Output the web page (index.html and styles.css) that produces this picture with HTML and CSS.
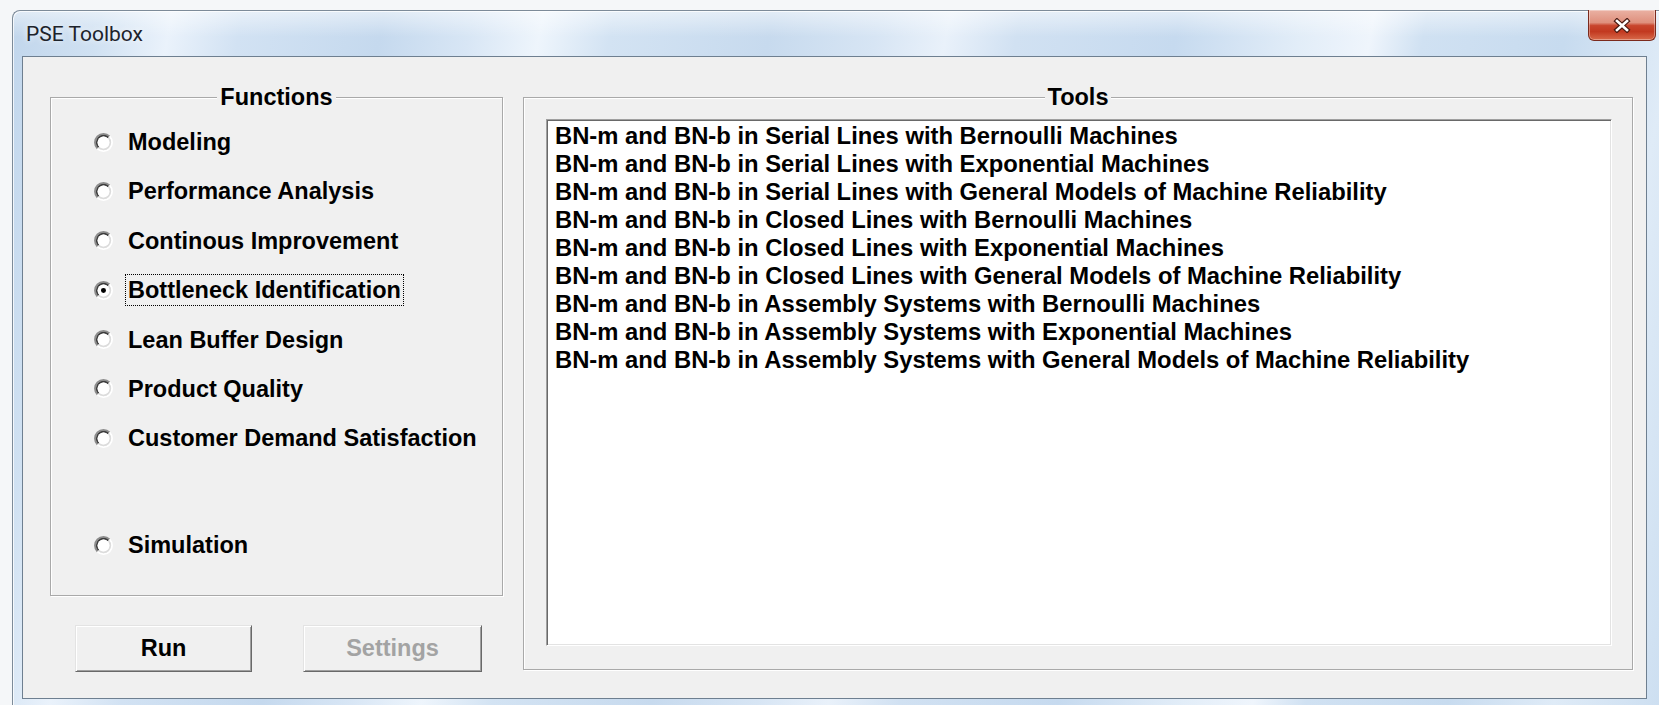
FILE: index.html
```html
<!DOCTYPE html>
<html lang="en">
<head>
<meta charset="utf-8">
<title>PSE Toolbox</title>
<link rel="stylesheet" href="styles.css">
</head>
<body>
<svg class="defs" width="0" height="0" aria-hidden="true">
  <symbol id="radio-ring" viewBox="0 0 16 16">
    <path d="M2.9 13.1 A7.2 7.2 0 0 1 13.1 2.9" fill="none" stroke="#8c8c8c" stroke-width="1.5"/>
    <path d="M13.1 2.9 A7.2 7.2 0 0 1 2.9 13.1" fill="none" stroke="#ffffff" stroke-width="1.5"/>
    <path d="M3.9 12.1 A5.8 5.8 0 0 1 12.1 3.9" fill="none" stroke="#3c3c3c" stroke-width="1.5"/>
    <path d="M12.1 3.9 A5.8 5.8 0 0 1 3.9 12.1" fill="none" stroke="#dcdcdc" stroke-width="1.5"/>
    <circle cx="8" cy="8" r="5" fill="#ffffff"/>
  </symbol>
</svg>

<div class="window">
  <div class="titlebar">
    <span class="title">PSE Toolbox</span>
    <button class="close" type="button" aria-label="Close">
      <svg width="18" height="15" viewBox="0 0 18 15">
        <path d="M4 3 L14 12 M14 3 L4 12" stroke="#4a1a12" stroke-width="5" stroke-linecap="square" fill="none"/>
        <path d="M4 3 L14 12 M14 3 L4 12" stroke="#ffffff" stroke-width="2.6" stroke-linecap="square" fill="none"/>
      </svg>
    </button>
  </div>

  <div class="client">
    <div class="left">
      <div class="group functions">
        <div class="group-title">Functions</div>
        <ul class="options">
          <li class="option"><svg class="radio" viewBox="0 0 16 16"><use href="#radio-ring" width="16" height="16"/></svg><span class="opt-label">Modeling</span></li>
          <li class="option"><svg class="radio" viewBox="0 0 16 16"><use href="#radio-ring" width="16" height="16"/></svg><span class="opt-label">Performance Analysis</span></li>
          <li class="option"><svg class="radio" viewBox="0 0 16 16"><use href="#radio-ring" width="16" height="16"/></svg><span class="opt-label">Continous Improvement</span></li>
          <li class="option is-checked"><svg class="radio" viewBox="0 0 16 16"><use href="#radio-ring" width="16" height="16"/><circle cx="8" cy="8" r="2.1" fill="#000"/></svg><span class="opt-label is-focused">Bottleneck Identification</span></li>
          <li class="option"><svg class="radio" viewBox="0 0 16 16"><use href="#radio-ring" width="16" height="16"/></svg><span class="opt-label">Lean Buffer Design</span></li>
          <li class="option"><svg class="radio" viewBox="0 0 16 16"><use href="#radio-ring" width="16" height="16"/></svg><span class="opt-label">Product Quality</span></li>
          <li class="option"><svg class="radio" viewBox="0 0 16 16"><use href="#radio-ring" width="16" height="16"/></svg><span class="opt-label">Customer Demand Satisfaction</span></li>
          <li class="option option-apart"><svg class="radio" viewBox="0 0 16 16"><use href="#radio-ring" width="16" height="16"/></svg><span class="opt-label">Simulation</span></li>
        </ul>
      </div>
      <div class="actions">
        <button class="btn btn-run" type="button">Run</button>
        <button class="btn btn-settings" type="button" disabled>Settings</button>
      </div>
    </div>

    <div class="group tools">
      <div class="group-title">Tools</div>
      <div class="listbox">
        <div class="list-item">BN-m and BN-b in Serial Lines with Bernoulli Machines</div>
        <div class="list-item">BN-m and BN-b in Serial Lines with Exponential Machines</div>
        <div class="list-item">BN-m and BN-b in Serial Lines with General Models of Machine Reliability</div>
        <div class="list-item">BN-m and BN-b in Closed Lines with Bernoulli Machines</div>
        <div class="list-item">BN-m and BN-b in Closed Lines with Exponential Machines</div>
        <div class="list-item">BN-m and BN-b in Closed Lines with General Models of Machine Reliability</div>
        <div class="list-item">BN-m and BN-b in Assembly Systems with Bernoulli Machines</div>
        <div class="list-item">BN-m and BN-b in Assembly Systems with Exponential Machines</div>
        <div class="list-item">BN-m and BN-b in Assembly Systems with General Models of Machine Reliability</div>
      </div>
    </div>
  </div>
</div>
</body>
</html>
```

FILE: styles.css
```css
html, body {
  margin: 0;
  padding: 0;
}

body {
  width: 1659px;
  height: 705px;
  overflow: hidden;
  background: #f5f7f9;
  font-family: "Liberation Sans", Arial, sans-serif;
  color: #000;
}

.defs {
  position: absolute;
  width: 0;
  height: 0;
  overflow: hidden;
}

/* Glass window frame */
.window {
  margin: 10px 0 0 12px;
  height: 695px;
  border-top: 1px solid #7d8b99;
  border-left: 1px solid #7d8b99;
  border-radius: 8px 0 0 0;
  display: flex;
  flex-direction: column;
  background:
    linear-gradient(180deg, rgba(255, 255, 255, 0.5) 0, rgba(255, 255, 255, 0) 26px),
    linear-gradient(100deg,
      #c1d6ec 0%, #d0e1f2 5%, #eaf2fb 9%, #d2e2f3 13%, #c5d9ee 21%,
      #d8e6f5 26%, #eef5fc 30%, #d3e3f3 34%, #c7daee 43%, #d7e5f4 49%,
      #e9f1fa 53%, #d1e1f2 57%, #c6daef 66%, #e2edf8 73%, #eff5fc 77%,
      #d0e1f2 80%, #c7dbef 88%, #dfebf7 94%, #cddff1 100%);
  box-shadow: inset 1px 1px 0 rgba(255, 255, 255, 0.75);
}

.titlebar {
  height: 45px;
  flex: none;
  display: flex;
  align-items: center;
  padding-left: 13px;
}

.title {
  flex: 1;
  font-family: Roboto, "Open Sans", sans-serif;
  font-size: 21px;
  color: #1d232b;
  text-shadow: 0 0 6px rgba(255, 255, 255, 0.95);
}

.close {
  align-self: flex-start;
  margin: -1px 3px 0 0;
  width: 68px;
  height: 31px;
  padding: 0;
  display: flex;
  align-items: center;
  justify-content: center;
  border: 1px solid #7b2a1d;
  border-top: none;
  border-radius: 0 0 6px 6px;
  background: linear-gradient(180deg,
    #eab1a3 0%, #df907d 42%, #c8452d 52%, #c23920 72%, #d86a4a 100%);
  box-shadow: inset 0 0 0 1px rgba(255, 255, 255, 0.35);
}

/* Dialog client area */
.client {
  margin-left: 9px;
  width: 1625px;
  height: 643px;
  box-sizing: border-box;
  border: 1px solid #6e7f90;
  background: #f0f0f0;
  display: flex;
  gap: 20px;
  padding: 40px 0 0 27px;
}

.left {
  width: 453px;
  display: flex;
  flex-direction: column;
}

.group {
  box-sizing: border-box;
  border: 1px solid #a9a9a9;
  box-shadow: inset 1px 1px 0 #fff, 1px 1px 0 #fff;
}

.group-title {
  width: fit-content;
  margin: -15px auto 0;
  padding: 0 3px;
  background: #f0f0f0;
  font-weight: bold;
  font-size: 23.5px;
  line-height: 28px;
}

.functions {
  height: 499px;
}

.options {
  list-style: none;
  margin: 17px 0 0;
  padding: 0 0 0 43px;
  display: flex;
  flex-direction: column;
  gap: 21.4px;
}

.option {
  display: flex;
  align-items: center;
  height: 28px;
  font-weight: bold;
  font-size: 23.5px;
  line-height: 28px;
  white-space: nowrap;
}

.option-apart {
  margin-top: 57.6px;
}

.radio {
  width: 19px;
  height: 19px;
  flex: none;
  margin-right: 12px;
}

.opt-label {
  padding: 1px 2px;
  margin: -2px 0;
  border: 1px dotted transparent;
}

.opt-label.is-focused {
  border-color: #000;
}

.actions {
  display: flex;
  gap: 51px;
  margin: 29px 0 0 25px;
}

.btn {
  height: 47px;
  padding: 0;
  font-family: "Liberation Sans", Arial, sans-serif;
  font-weight: bold;
  font-size: 23.5px;
  color: #000;
  background: #f0f0f0;
  border: 1px solid;
  border-color: #e3e3e3 #696969 #696969 #e3e3e3;
  box-shadow: inset 1px 1px 0 #fff, inset -1px -1px 0 #a0a0a0;
}

.btn-run {
  width: 177px;
}

.btn-settings {
  width: 179px;
}

.btn:disabled {
  color: #a3a3a3;
}

.tools {
  width: 1110px;
  height: 573px;
}

.listbox {
  margin: 8px 20px 0 22px;
  height: 527px;
  box-sizing: border-box;
  background: #fff;
  border: 1px solid;
  border-color: #a0a0a0 #fff #fff #a0a0a0;
  box-shadow: inset 1px 1px 0 #696969, inset -1px -1px 0 #e3e3e3;
  padding: 2px 0 0 8px;
}

.list-item {
  font-weight: bold;
  font-size: 23.8px;
  line-height: 28px;
  white-space: nowrap;
}
```
